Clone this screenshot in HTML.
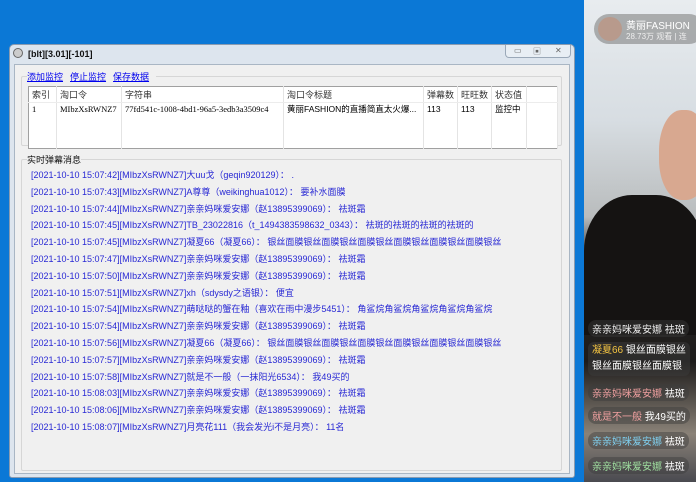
<!DOCTYPE html>
<html><head><meta charset="utf-8"><style>
*{margin:0;padding:0;box-sizing:border-box}
body{width:696px;height:482px;overflow:hidden;background:#0b78d6;position:relative;font-family:"Liberation Sans","Noto Sans CJK SC",sans-serif}
.win{position:absolute;left:9px;top:44px;width:566px;height:434px;background:#dde5ee;border:1px solid #8a9bb0;border-radius:5px 5px 3px 3px}
.title{position:absolute;left:18px;top:4px;font-size:9px;font-weight:bold;color:#111}
.icon{position:absolute;left:3px;top:3px;width:10px;height:10px;border-radius:50%;background:#ccc;border:1px solid #666}
.btns{position:absolute;left:495px;top:0;width:66px;height:13px;border:1px solid #9aa8b8;border-top:none;border-radius:0 0 4px 4px;background:#e8eef4;font-size:8px;color:#666}
.btns span{position:absolute;top:1px}
.client{position:absolute;left:4px;top:19px;width:556px;height:410px;background:#f0f0f0;border:1px solid #a9b6c4}
.links{position:absolute;left:12px;top:5px;font-size:9px;color:#0000ee;text-decoration:underline;background:#f0f0f0}
.links span{margin-right:7px}
.gb{position:absolute;border:1px solid #d6d6d6;border-radius:2px}
table{position:absolute;left:13px;top:21px;width:530px;border-collapse:collapse;background:#fff;font-size:8.5px;border:1px solid #a0a0a0}
td{border-right:1px solid #e4e4e4;height:11px;padding:0 3px;white-space:nowrap;overflow:hidden}
tr.h td{height:16px;font-size:9px;color:#333;border-bottom:1px solid #ececec}
.msgs{position:absolute;left:16px;top:102px;font-size:9px;color:#2828d4;white-space:nowrap;line-height:16.8px}
.lbl{position:absolute;left:12px;top:88px;font-size:9px;color:#111;background:#f0f0f0}
.video{position:absolute;left:584px;top:0;width:112px;height:482px;background:linear-gradient(#e8ecef 0,#d7dde2 25%,#b9bcbd 45%,#2a2725 55%,#1d1b1a 75%,#8a8278 90%,#4a4a50 100%);overflow:hidden}
.chat{position:absolute;left:4px;font-size:10px;white-space:nowrap;padding:1px 4px;border-radius:8px;background:rgba(60,60,60,.45)}
</style></head><body>
<div class="win">
 <div class="icon"></div>
 <div class="title">[blt][3.01][-101]</div>
 <div class="btns"><span style="left:8px">▭</span><span style="left:27px">▣</span><span style="left:49px">✕</span></div>
 <div class="client">
  <div class="gb" style="left:6px;top:11px;width:541px;height:70px"></div>
  <div class="links"><span>添加监控</span><span>停止监控</span><span>保存数据</span></div>
  <table>
   <tr class="h"><td style="width:28px">索引</td><td style="width:65px">淘口令</td><td style="width:162px">字符串</td><td style="width:140px">淘口令标题</td><td style="width:34px">弹幕数</td><td style="width:32px">旺旺数</td><td style="width:35px">状态值</td><td></td></tr>
   <tr><td style="font-family:'Liberation Serif',serif">1</td><td style="font-family:'Liberation Serif',serif">MIbzXsRWNZ7</td><td style="font-family:'Liberation Serif',serif">77fd541c-1008-4bd1-96a5-3edb3a3509c4</td><td>黄丽FASHION的直播简直太火爆...</td><td>113</td><td>113</td><td>监控中</td><td></td></tr>
   <tr><td></td><td></td><td></td><td></td><td></td><td></td><td></td><td></td></tr>
   <tr><td></td><td></td><td></td><td></td><td></td><td></td><td></td><td></td></tr>
   <tr><td></td><td></td><td></td><td></td><td></td><td></td><td></td><td></td></tr>
  </table>
  <div class="gb" style="left:6px;top:94px;width:541px;height:312px"></div>
  <div class="lbl">实时弹幕消息</div>
  <div class="msgs">
[2021-10-10 15:07:42][MIbzXsRWNZ7]大uu戈（geqin920129）： .<br>
[2021-10-10 15:07:43][MIbzXsRWNZ7]A尊尊（weikinghua1012）： 要补水面膜<br>
[2021-10-10 15:07:44][MIbzXsRWNZ7]亲亲妈咪爱安娜（赵13895399069）： 祛斑霜<br>
[2021-10-10 15:07:45][MIbzXsRWNZ7]TB_23022816（t_1494383598632_0343）： 祛斑的祛斑的祛斑的祛斑的<br>
[2021-10-10 15:07:45][MIbzXsRWNZ7]凝夏66（凝夏66）： 银丝面膜银丝面膜银丝面膜银丝面膜银丝面膜银丝面膜银丝<br>
[2021-10-10 15:07:47][MIbzXsRWNZ7]亲亲妈咪爱安娜（赵13895399069）： 祛斑霜<br>
[2021-10-10 15:07:50][MIbzXsRWNZ7]亲亲妈咪爱安娜（赵13895399069）： 祛斑霜<br>
[2021-10-10 15:07:51][MIbzXsRWNZ7]xh（sdysdy之语银）： 便宜<br>
[2021-10-10 15:07:54][MIbzXsRWNZ7]萌哒哒的蟹在釉（喜欢在雨中漫步5451）： 角鲨烷角鲨烷角鲨烷角鲨烷角鲨烷<br>
[2021-10-10 15:07:54][MIbzXsRWNZ7]亲亲妈咪爱安娜（赵13895399069）： 祛斑霜<br>
[2021-10-10 15:07:56][MIbzXsRWNZ7]凝夏66（凝夏66）： 银丝面膜银丝面膜银丝面膜银丝面膜银丝面膜银丝面膜银丝<br>
[2021-10-10 15:07:57][MIbzXsRWNZ7]亲亲妈咪爱安娜（赵13895399069）： 祛斑霜<br>
[2021-10-10 15:07:58][MIbzXsRWNZ7]就是不一般（一抹阳光6534）： 我49买的<br>
[2021-10-10 15:08:03][MIbzXsRWNZ7]亲亲妈咪爱安娜（赵13895399069）： 祛斑霜<br>
[2021-10-10 15:08:06][MIbzXsRWNZ7]亲亲妈咪爱安娜（赵13895399069）： 祛斑霜<br>
[2021-10-10 15:08:07][MIbzXsRWNZ7]月亮花111（我会发光i不是月亮）： 11名
  </div>
 </div>
</div>
<div class="video">
 <div style="position:absolute;left:10px;top:14px;width:110px;height:30px;border-radius:15px;background:rgba(120,120,120,.55)"></div>
 <div style="position:absolute;left:14px;top:17px;width:24px;height:24px;border-radius:50%;background:#b89a8c"></div>
 <div style="position:absolute;left:42px;top:17px;font-size:10px;color:#fff;white-space:nowrap">黄丽FASHION</div>
 <div style="position:absolute;left:42px;top:31px;font-size:8px;color:#eee;white-space:nowrap">28.73万 观看 | 连</div>
 <div style="position:absolute;left:75px;top:110px;width:50px;height:90px;border-radius:45%;background:#d8a890"></div>
 <div style="position:absolute;left:0;top:195px;width:120px;height:140px;border-radius:40% 40% 0 0;background:#151312"></div>
 <div class="chat" style="top:320px;color:#eee">亲亲妈咪爱安娜 祛斑</div>
 <div style="position:absolute;left:4px;top:342px;font-size:10px;white-space:nowrap;color:#fff;background:rgba(60,60,60,.5);padding:1px 4px;border-radius:6px;line-height:16px"><span style="color:#f5c542">凝夏66</span> 银丝面膜银丝<br>银丝面膜银丝面膜银</div>
 <div class="chat" style="top:384px;color:#f0a0a0">亲亲妈咪爱安娜 <span style="color:#fff">祛斑</span></div>
 <div class="chat" style="top:407px;color:#f0a0a0">就是不一般 <span style="color:#fff">我49买的</span></div>
 <div class="chat" style="top:432px;color:#7fd0f0">亲亲妈咪爱安娜 <span style="color:#fff">祛斑</span></div>
 <div class="chat" style="top:457px;color:#a0e0a0">亲亲妈咪爱安娜 <span style="color:#fff">祛斑</span></div>
</div>
</body></html>
